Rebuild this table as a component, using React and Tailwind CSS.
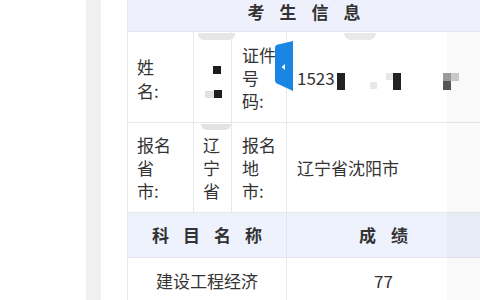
export default function App() {
  const font = { fontFamily: '"Noto Sans CJK SC", "Noto Sans", sans-serif' };
  return (
    <div className="relative flex w-[480px] h-[300px] overflow-hidden bg-white text-[#333]" style={font}>
      <div className="w-[86px] shrink-0 bg-white" />
      <div className="w-[15px] shrink-0 bg-[#f0f0f3]" />
      <div className="w-[26px] shrink-0 bg-white" />
      <div className="flex-1 flex flex-col border-l border-[#e6e6e6]">
        {/* header */}
        <div className="h-[32px] shrink-0 flex justify-center items-start pt-[1px] bg-[#eef1fc] border-b border-[#e3e6ee]">
          <span className="text-[17px] font-bold leading-[22px] tracking-[15px] pl-[15px] text-[#333]">考生信息</span>
        </div>
        {/* row 1 */}
        <div className="h-[91px] shrink-0 flex border-b border-[#e8e8e8]">
          <div className="w-[66px] shrink-0 border-r border-[#e8e8e8] flex flex-col justify-center pl-[9px] text-[17px] leading-[24px] pt-[3px]">
            <span>姓</span>
            <span>名:</span>
          </div>
          <div className="w-[38px] shrink-0 border-r border-[#e8e8e8]" />
          <div className="w-[55px] shrink-0 border-r border-[#e8e8e8] flex flex-col justify-center pl-[10px] text-[17px] leading-[23px]">
            <span>证件</span>
            <span>号</span>
            <span>码:</span>
          </div>
          <div className="flex-1 flex items-center pl-[10px] pt-[1px] text-[17px]">
            <span>1523</span>
          </div>
        </div>
        {/* row 2 */}
        <div className="h-[90px] shrink-0 flex border-b border-[#e8e8e8] text-[17px] leading-[23px]">
          <div className="w-[66px] shrink-0 border-r border-[#e8e8e8] flex flex-col justify-center pl-[9px]">
            <span>报名</span>
            <span>省</span>
            <span>市:</span>
          </div>
          <div className="w-[38px] shrink-0 border-r border-[#e8e8e8] flex flex-col justify-center pl-[9px]">
            <span>辽</span>
            <span>宁</span>
            <span>省</span>
          </div>
          <div className="w-[55px] shrink-0 border-r border-[#e8e8e8] flex flex-col justify-center pl-[10px]">
            <span>报名</span>
            <span>地</span>
            <span>市:</span>
          </div>
          <div className="flex-1 flex items-center pl-[10px]">
            <span>辽宁省沈阳市</span>
          </div>
        </div>
        {/* subject header */}
        <div className="h-[45px] shrink-0 flex bg-[#eef2fc] border-b border-[#e3e6ee] text-[17px] font-bold">
          <div className="w-[159px] shrink-0 border-r border-[#e3e6ee] flex items-center justify-center">
            <span className="tracking-[14px] pl-[14px]">科目名称</span>
          </div>
          <div className="flex-1 flex items-center justify-center">
            <span className="tracking-[15px] pl-[15px]">成绩</span>
          </div>
        </div>
        {/* subject row */}
        <div className="h-[45px] shrink-0 flex text-[17px]">
          <div className="w-[159px] shrink-0 border-r border-[#e8e8e8] flex items-center justify-center">
            <span>建设工程经济</span>
          </div>
          <div className="flex-1 flex items-center justify-center">
            <span>77</span>
          </div>
        </div>
      </div>

      {/* right shade overlay */}
      <div className="absolute left-[447px] top-[32px] w-[33px] h-[268px] bg-black/[0.025]" />

      {/* blur artifacts */}
      <div className="absolute left-[198px] top-[33px] w-[37px] h-[7px] rounded-b-[6px] bg-[#e6e6e6]" />
      <div className="absolute left-[344px] top-[33px] w-[32px] h-[7px] rounded-b-[8px] bg-[#e9e9e9]" />
      <div className="absolute left-[201px] top-[124px] w-[30px] h-[6px] rounded-b-[10px] bg-[#e3e3e3]" />

      {/* redaction marks row1 col2 */}
      <div className="absolute left-[213px] top-[66px] w-[8px] h-[8px] bg-[#1e1e1e]" />
      <div className="absolute left-[205px] top-[91px] w-[9px] h-[7px] bg-[#e2e2e2]" />
      <div className="absolute left-[214px] top-[90px] w-[8px] h-[8px] bg-[#1e1e1e]" />

      {/* redaction marks row1 col4 */}
      <div className="absolute left-[337px] top-[73px] w-[8px] h-[17px] bg-[#222]" />
      <div className="absolute left-[370px] top-[82px] w-[7px] h-[7px] bg-[#e8e8e8]" />
      <div className="absolute left-[386px] top-[73px] w-[7px] h-[7px] bg-[#e6e6e6]" />
      <div className="absolute left-[393px] top-[73px] w-[8px] h-[17px] bg-[#222]" />
      <div className="absolute left-[443px] top-[73px] w-[16px] h-[8px] bg-[#c8c8c8]" />
      <div className="absolute left-[443px] top-[73px] w-[8px] h-[8px] bg-[#9a9a9a]" />
      <div className="absolute left-[443px] top-[81px] w-[8px] h-[9px] bg-[#555]" />

      {/* blue side tab */}
      <svg className="absolute left-[273px] top-[40px]" width="21" height="52" viewBox="0 0 21 52">
        <path d="M2 8 Q2 5 5 4.5 L20 1 L20 51 L5 44 Q2 43.5 2 40 Z" fill="#1a86e3" />
        <path d="M12 24 L8.5 27 L12 30 Z" fill="#ffffff" />
      </svg>
    </div>
  );
}
